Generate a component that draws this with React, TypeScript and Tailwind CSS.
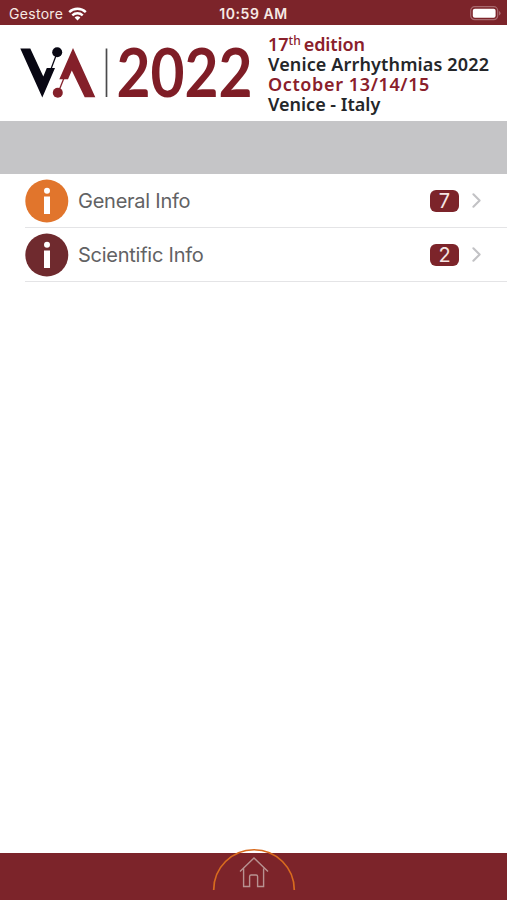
import { ChevronRight } from "lucide-react"

interface InfoRow {
  label: string
  count: number
  color: string
}

const rows: InfoRow[] = [
  { label: "General Info", count: 7, color: "#e1752c" },
  { label: "Scientific Info", count: 2, color: "#6f2a2e" },
]

function StatusBar() {
  return (
    <div className="grid h-[25px] grid-cols-3 items-center bg-[#7c242a] pt-[2px] text-[#f7e9e4]">
      <div className="flex items-center gap-[5px] pl-[9px]">
        <span className="text-[14px] leading-none tracking-[0.3px]">Gestore</span>
        <svg width="19" height="14" viewBox="0 0 19 14" fill="none" stroke="#fff" strokeWidth="2.4">
          <path d="M1.2 5.2a11.8 11.8 0 0 1 16.6 0" />
          <path d="M4.3 8.4a7.4 7.4 0 0 1 10.4 0" />
          <path d="M9.5 13.6 6.6 10.6a4.1 4.1 0 0 1 5.8 0z" fill="#fff" stroke="none" />
        </svg>
      </div>
      <span className="text-center text-[14px] font-semibold leading-none tracking-[0.55px]">10:59 AM</span>
      <div className="flex justify-end pr-[6px]">
        <svg width="31" height="15" viewBox="0 0 31 15">
          <rect x="0.7" y="0.7" width="27" height="13" rx="4" fill="none" stroke="#a8696e" strokeWidth="1.2" />
          <rect x="2.8" y="2.7" width="22.8" height="9" rx="2" fill="#fff" />
          <path d="M29 5v4.400q1.600-.8 1.600-2.200T29 5" fill="#a8696e" />
        </svg>
      </div>
    </div>
  )
}

function Logo() {
  return (
    <svg className="shrink-0" width="260" height="95" viewBox="0 25 260 95">
      {/* V */}
      <path d="M20.300 48.500h10L43.300 76.500 46.800 68H55L42.300 97.500z" fill="#080713" />
      <path d="M51 69 57 53" stroke="#080713" strokeWidth="1.300" />
      <circle cx="57.200" cy="52.200" r="5" fill="#080713" />
      {/* A */}
      <path d="M73 48 95.300 97.200H84.700L71.800 70.500 68 79.300H59.300z" fill="#84202a" />
      <path d="M64 78 58 93" stroke="#84202a" strokeWidth="1.300" />
      <circle cx="57.800" cy="92.800" r="5" fill="#84202a" />
      <path d="M106.500 48.500v48.500" stroke="#4a4a4c" strokeWidth="1.700" />
      <text
        x="116.500"
        y="97"
        textLength="136"
        lengthAdjust="spacingAndGlyphs"
        className="overflow-visible font-['Lato'] text-[67px] font-bold"
        fill="#7f1d26"
      >
        2022
      </text>
    </svg>
  )
}

function Header() {
  return (
    <header className="flex h-24 bg-white">
      <Logo />
      <div className="flex flex-col whitespace-nowrap pl-2 pt-[9px] font-['Noto_Sans',sans-serif] text-[18px] font-semibold leading-5 text-[#242629]">
        <p className="text-[#8a202b]">
          17<span className="relative -top-[6px] mr-[3px] text-[12px] font-medium leading-none">th</span>
          <span className="tracking-[-0.1px]">edition</span>
        </p>
        <p className="tracking-[0.14px]">Venice Arrhythmias 2022</p>
        <p className="tracking-[0.62px] text-[#8a202b]">October 13/14/15</p>
        <p>Venice - Italy</p>
      </div>
    </header>
  )
}

function Row({ label, count, color }: InfoRow) {
  return (
    <li className="ml-[25px] flex h-[54px] items-center border-b border-[#e4e4e6] pr-[25px]">
      <svg width="44" height="44" viewBox="0 0 44 44" className="shrink-0">
        <circle cx="21.800" cy="22" r="21.500" fill={color} />
        <circle cx="22" cy="11.700" r="3" fill="#fff" />
        <path d="M19 17.500h6V35h-6z" fill="#fff" />
      </svg>
      <span className="ml-[9px] text-[20px] tracking-[-0.25px] text-[#626264]">{label}</span>
      <span className="ml-auto flex h-[22px] w-[29px] items-center justify-center rounded-[6px] bg-[#7c242a] text-[20px] leading-none text-[#f6e6e4]">
        {count}
      </span>
      <ChevronRight className="-mr-[7px] ml-[5px] h-[25px] w-[25px] text-[#c2c2c5]" strokeWidth={2} />
    </li>
  )
}

function Footer() {
  return (
    <footer className="relative h-[47px] bg-[#7c242a]">
      <svg
        className="absolute bottom-0 left-1/2 -translate-x-1/2"
        width="120"
        height="60"
        viewBox="194 840 120 60"
        fill="none"
      >
        <path d="M213.700 890a40.300 40.300 0 0 1 80.600 0" stroke="#d86b1e" strokeWidth="1.700" />
        <path
          d="M240 871.500 254 858l14 13.500M243.600 868.500V886.500h6V876.500q0-1.500 1.500-1.500h5q1.500 0 1.500 1.500V886.500h6V868.500"
          stroke="#b89291"
          strokeWidth="1.400"
        />
      </svg>
    </footer>
  )
}

export default function App() {
  return (
    <div className="flex h-[900px] w-full flex-col overflow-hidden bg-white font-['Inter',sans-serif]">
      <StatusBar />
      <Header />
      <div className="h-[53px] shrink-0 bg-[#c5c5c7]" />
      <ul className="flex-1">
        {rows.map(row => (
          <Row key={row.label} {...row} />
        ))}
      </ul>
      <Footer />
    </div>
  )
}
